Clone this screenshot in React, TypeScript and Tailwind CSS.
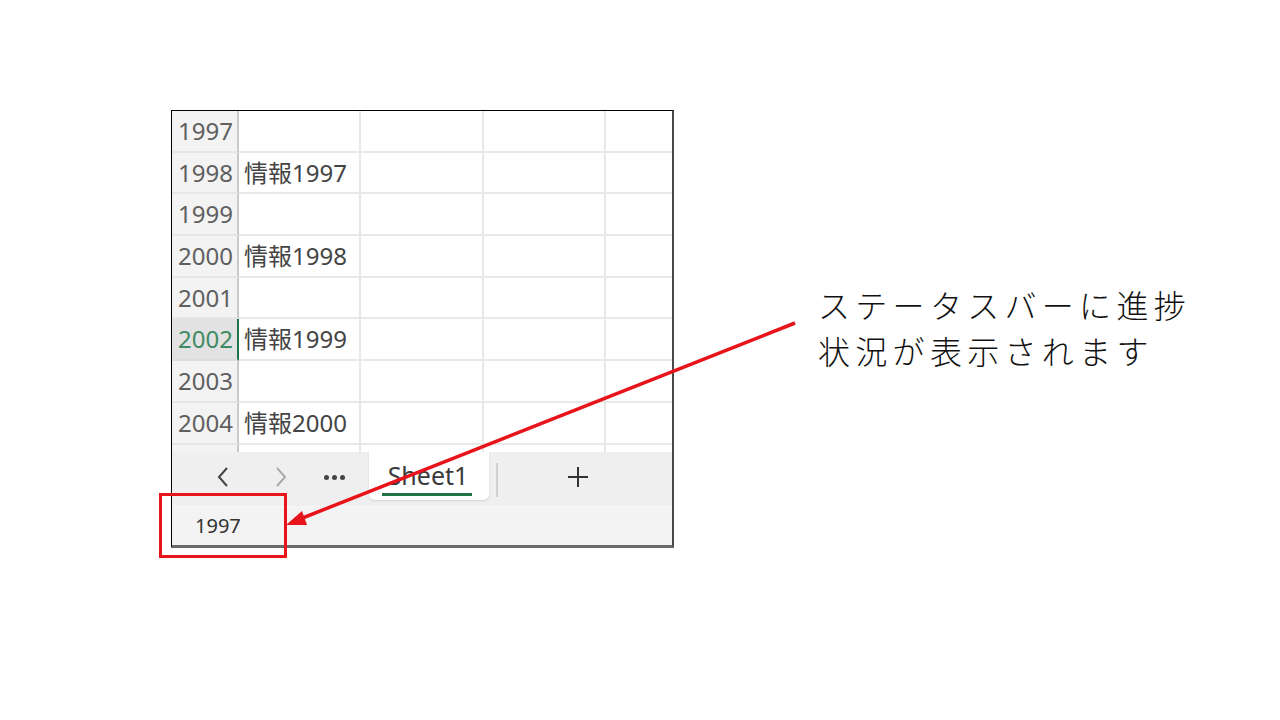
import React from "react";

const rows: { n: string; v: string; sel?: boolean }[] = [
  { n: "1997", v: "" },
  { n: "1998", v: "情報1997" },
  { n: "1999", v: "" },
  { n: "2000", v: "情報1998" },
  { n: "2001", v: "" },
  { n: "2002", v: "情報1999", sel: true },
  { n: "2003", v: "" },
  { n: "2004", v: "情報2000" },
];

const font = { fontFamily: '"Noto Sans", "Noto Sans CJK JP", sans-serif' };

function Row({ n, v, sel, h }: { n: string; v: string; sel?: boolean; h: string }) {
  return (
    <div className={`flex ${h}`}>
      <div
        className={`w-[67px] shrink-0 flex items-center pl-[6px] text-[24px] border-b-2 border-r-2 ${
          sel
            ? "bg-[#e2e2e2] text-[#3f8a62] border-r-[#217346] border-b-[#dcdcdc]"
            : "bg-[#f3f3f3] text-[#5f5f5f] border-r-[#c9c9c9] border-b-[#e6e6e6]"
        }`}
      >
        {n}
      </div>
      <div className="w-[122px] shrink-0 flex items-center pl-[5px] text-[24px] text-[#444] border-b-2 border-r-2 border-[#e8e8e8]">
        {v}
      </div>
      <div className="w-[123px] shrink-0 border-b-2 border-r-2 border-[#e8e8e8]" />
      <div className="w-[122px] shrink-0 border-b-2 border-r-2 border-[#e8e8e8]" />
      <div className="flex-1 border-b-2 border-[#e8e8e8]" />
    </div>
  );
}

export default function App() {
  return (
    <div className="relative w-[1280px] h-[720px] bg-white overflow-hidden" style={font}>
      {/* Excel screenshot */}
      <div className="absolute left-[171px] top-[110px] w-[503px] h-[438px] border-t border-l border-black border-r-2 border-r-[#4a4a4a] border-b-[3px] border-b-[#6a6a6a] flex flex-col bg-white">
        <div className="flex flex-col h-[341px] overflow-hidden">
          {rows.map((r) => (
            <Row key={r.n} {...r} h="h-[41.7px]" />
          ))}
          <div className="flex flex-1">
            <div className="w-[67px] shrink-0 bg-[#f3f3f3] border-r-2 border-[#c9c9c9]" />
            <div className="w-[122px] shrink-0 border-r-2 border-[#e8e8e8]" />
            <div className="w-[123px] shrink-0 border-r-2 border-[#e8e8e8]" />
            <div className="w-[122px] shrink-0 border-r-2 border-[#e8e8e8]" />
            <div className="flex-1" />
          </div>
        </div>
        {/* tab bar */}
        <div className="h-[55px] bg-[#efefef] flex items-start border-b border-[#f8f8f8]">
          <div className="w-[197px] h-[50px] flex items-center text-[#444]">
            <div className="w-[16px] ml-[43px] flex justify-center">
              <svg width="14" height="22" viewBox="0 0 14 22">
                <path d="M11 2 L3 11 L11 20" fill="none" stroke="#444" strokeWidth="2" />
              </svg>
            </div>
            <div className="w-[16px] ml-[42px] flex justify-center">
              <svg width="14" height="22" viewBox="0 0 14 22">
                <path d="M3 2 L11 11 L3 20" fill="none" stroke="#aaa" strokeWidth="2" />
              </svg>
            </div>
            <div className="ml-[35px] flex gap-[3px]">
              <span className="w-[5px] h-[5px] rounded-full bg-[#444]" />
              <span className="w-[5px] h-[5px] rounded-full bg-[#444]" />
              <span className="w-[5px] h-[5px] rounded-full bg-[#444]" />
            </div>
          </div>
          <div className="w-[120px] h-[48px] bg-white rounded-b-[6px] shadow-[0_1px_2px_rgba(0,0,0,0.12)] flex flex-col items-center">
            <div className="h-[41px] flex items-end text-[25px] text-[#3a3a3a] leading-none pb-[5px] ml-[-2px]">Sheet1</div>
            <div className="w-[90px] h-[3px] bg-[#217346] ml-[-4px]" />
          </div>
          <div className="w-[2px] h-[34px] bg-[#d0d0d0] mt-[11px] ml-[7px]" />
          <div className="w-[160px] h-[50px] flex items-center justify-center">
            <svg width="22" height="22" viewBox="0 0 22 22">
              <path d="M11 1 V21 M1 11 H21" stroke="#333" strokeWidth="2" />
            </svg>
          </div>
        </div>
        {/* status bar */}
        <div className="flex-1 bg-[#f3f3f3] flex items-center pl-[23px] text-[20px] text-[#333]">1997</div>
      </div>

      {/* red highlight box */}
      <div className="absolute left-[159px] top-[493px] w-[128px] h-[65px] border-[3px] border-[#e8141b]" />

      {/* arrow */}
      <svg className="absolute left-0 top-0" width="1280" height="720" viewBox="0 0 1280 720">
        <line x1="795" y1="323" x2="300" y2="519" stroke="#e8141b" strokeWidth="3.5" />
        <polygon points="286,525 302,511 307,525" fill="#e8141b" />
      </svg>

      {/* annotation */}
      <div
        className="absolute left-[818px] top-[281px] text-[32px] leading-[46px] tracking-[5.3px] text-[#111] font-light"
        style={{ fontFamily: '"Noto Sans CJK JP", sans-serif' }}
      >
        <div>ステータスバーに進捗</div>
        <div>状況が表示されます</div>
      </div>
    </div>
  );
}
